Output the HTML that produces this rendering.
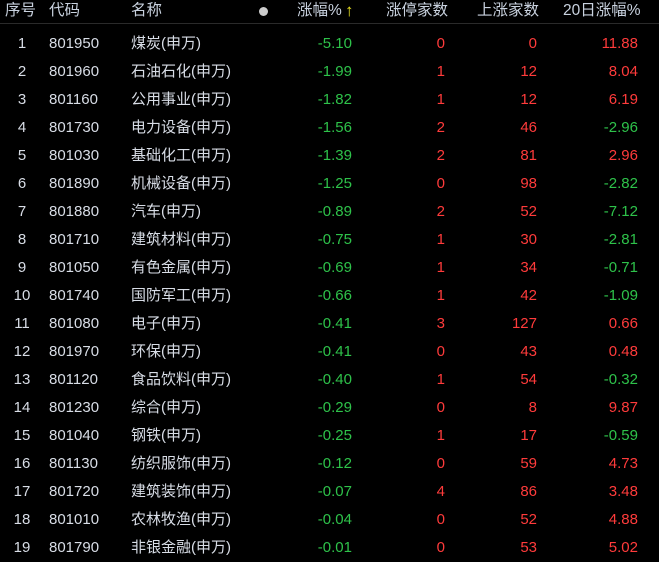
<!DOCTYPE html>
<html><head><meta charset="utf-8"><style>
body{margin:0;width:659px;height:560px;background:#000;overflow:hidden;font-family:"Liberation Sans","Noto Sans CJK SC",sans-serif;font-size:15px;}
.h{position:absolute;top:0;left:0;width:659px;height:23px;border-bottom:1px solid #2a2a2a;color:#c9d2df;}
.h span,.r span{position:absolute;white-space:nowrap;}
.r{position:absolute;left:0;width:659px;height:28px;line-height:28px;}
.h span{top:1px;line-height:20px;font-size:15.5px}
.w{color:#d8dde6}.g{color:#2ec24a}.d{color:#ff3b3b}
.a{text-align:right}
</style></head><body>
<div class="h">
<span style="left:5px">序号</span><span style="left:49px">代码</span><span style="left:131px">名称</span>
<span style="left:259px;top:7px;width:9px;height:9px;border-radius:50%;background:#ccc"></span>
<span style="left:297px">涨幅%</span><span style="left:345px;color:#e8e020;font-size:17px;font-weight:bold">↑</span>
<span style="left:386px">涨停家数</span><span style="left:477px">上涨家数</span><span style="left:563px">20日涨幅%</span>
</div>
<div id="rows"></div>
<script>
var d=[["801950","煤炭(申万)","-5.10",0,0,"11.88"],["801960","石油石化(申万)","-1.99",1,12,"8.04"],["801160","公用事业(申万)","-1.82",1,12,"6.19"],["801730","电力设备(申万)","-1.56",2,46,"-2.96"],["801030","基础化工(申万)","-1.39",2,81,"2.96"],["801890","机械设备(申万)","-1.25",0,98,"-2.82"],["801880","汽车(申万)","-0.89",2,52,"-7.12"],["801710","建筑材料(申万)","-0.75",1,30,"-2.81"],["801050","有色金属(申万)","-0.69",1,34,"-0.71"],["801740","国防军工(申万)","-0.66",1,42,"-1.09"],["801080","电子(申万)","-0.41",3,127,"0.66"],["801970","环保(申万)","-0.41",0,43,"0.48"],["801120","食品饮料(申万)","-0.40",1,54,"-0.32"],["801230","综合(申万)","-0.29",0,8,"9.87"],["801040","钢铁(申万)","-0.25",1,17,"-0.59"],["801130","纺织服饰(申万)","-0.12",0,59,"4.73"],["801720","建筑装饰(申万)","-0.07",4,86,"3.48"],["801010","农林牧渔(申万)","-0.04",0,52,"4.88"],["801790","非银金融(申万)","-0.01",0,53,"5.02"]];
var h="";d.forEach(function(r,i){var t=30+i*28;var c=r[5][0]=="-"?"g":"d";
h+='<div class="r" style="top:'+t+'px"><span class="w" style="left:0;width:44px;text-align:center">'+(i+1)+'</span><span class="w" style="left:49px">'+r[0]+'</span><span class="w" style="left:131px">'+r[1]+'</span><span class="g a" style="right:307px">'+r[2]+'</span><span class="d a" style="right:214px">'+r[3]+'</span><span class="d a" style="right:122px">'+r[4]+'</span><span class="'+c+' a" style="right:21px">'+r[5]+'</span></div>';});
document.getElementById("rows").innerHTML=h;
</script>
</body></html>
